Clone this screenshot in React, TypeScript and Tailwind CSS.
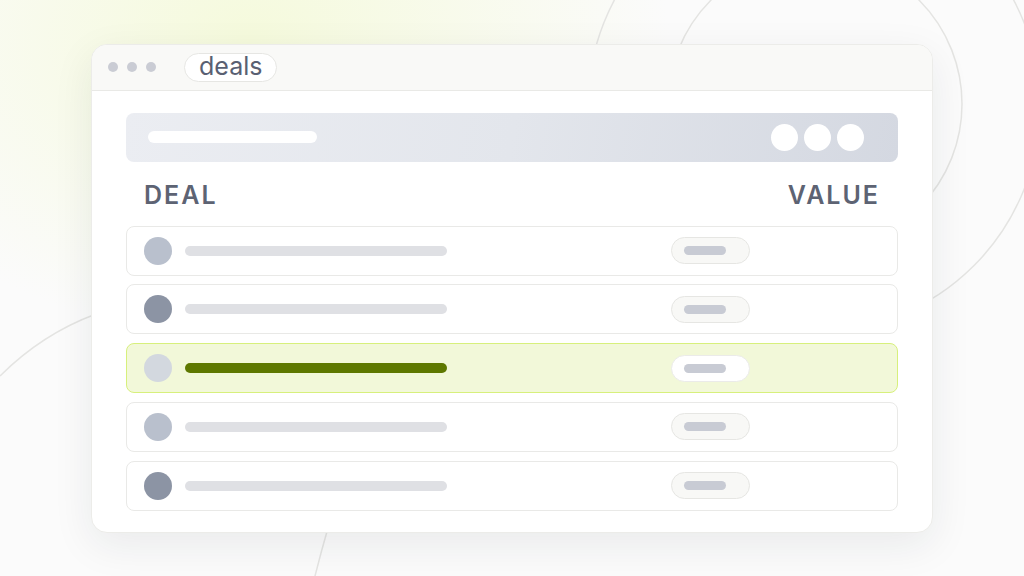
import React from 'react';

type Row = { avatar: string; active?: boolean };

const rows: Row[] = [
  { avatar: 'bg-[#b9c0cd]' },
  { avatar: 'bg-[#8c94a4]' },
  { avatar: 'bg-[#d3d8df]', active: true },
  { avatar: 'bg-[#b9c0cd]' },
  { avatar: 'bg-[#8c94a4]' },
];

const Backdrop = () => (
  <svg className="absolute inset-0 pointer-events-none" width="1024" height="576" viewBox="0 0 1024 576" fill="none">
    <circle cx="815" cy="104" r="147" stroke="#e4e4e2" strokeWidth="1.5" />
    <circle cx="814" cy="106" r="226" stroke="#e4e4e2" strokeWidth="1.5" />
    <path d="M0 376 Q 42 334 96 314" stroke="#e4e4e2" strokeWidth="1.5" />
    <path d="M328 528 Q 321 552 314 580" stroke="#e4e4e2" strokeWidth="1.5" />
  </svg>
);

const DealRow = ({ row }: { row: Row }) => (
  <div
    className={
      row.active
        ? 'h-[50px] flex items-center pl-[17px] rounded-[8px] border border-[#d7f07c] bg-[#f2f8d9]'
        : 'h-[50px] flex items-center pl-[17px] rounded-[8px] border border-[#e9e9e7] bg-white'
    }
  >
    <div className={`w-[28px] h-[28px] rounded-full ${row.avatar}`} />
    <div
      className={
        row.active
          ? 'ml-[13px] w-[262px] h-[10px] rounded-full bg-[#5e7800]'
          : 'ml-[13px] w-[262px] h-[10px] rounded-full bg-[#dfe0e4]'
      }
    />
    <div
      className={
        row.active
          ? 'ml-[224px] w-[79px] h-[27px] rounded-full border border-[#ebebe9] bg-white flex items-center pl-[12px]'
          : 'ml-[224px] w-[79px] h-[27px] rounded-full border border-[#e6e6e3] bg-[#f8f8f6] flex items-center pl-[12px]'
      }
    >
      <div className="w-[42px] h-[9px] rounded-full bg-[#c8cbd4]" />
    </div>
  </div>
);

export default function App() {
  return (
    <div
      className="relative w-full h-[576px] overflow-hidden flex items-center justify-center bg-[#fbfbfb] bg-[radial-gradient(ellipse_420px_300px_at_250px_40px,#f5fadc_0%,rgba(251,251,251,0)_100%)]"
      style={{ fontFamily: 'Inter, "Noto Sans", sans-serif' }}
    >
      <Backdrop />
      <div className="relative w-[842px] h-[489px] rounded-[16px] border border-[#ecece9] bg-white overflow-hidden shadow-[0_12px_40px_rgba(30,35,45,0.08)]">
        <div className="h-[46px] flex items-center bg-[#f9f9f7] border-b border-[#e9e9e6] pl-[16px]">
          <div className="flex gap-[9px]">
            <div className="w-[10px] h-[10px] rounded-full bg-[#caccd4]" />
            <div className="w-[10px] h-[10px] rounded-full bg-[#caccd4]" />
            <div className="w-[10px] h-[10px] rounded-full bg-[#caccd4]" />
          </div>
          <div className="ml-[28px] h-[29px] px-[14px] flex items-center rounded-full border border-[#e6e6e3] bg-white text-[25px] leading-none text-[#596072] pb-[1px]">
            deals
          </div>
        </div>
        <div className="px-[34px] pt-[22px]">
          <div className="h-[49px] flex items-center justify-between rounded-[8px] bg-[linear-gradient(100deg,#ebedf2_0%,#e3e6ec_50%,#d4d8e1_100%)] pl-[22px] pr-[34px]">
            <div className="w-[169px] h-[12px] rounded-full bg-white" />
            <div className="flex gap-[6px]">
              <div className="w-[27px] h-[27px] rounded-full bg-white" />
              <div className="w-[27px] h-[27px] rounded-full bg-white" />
              <div className="w-[27px] h-[27px] rounded-full bg-white" />
            </div>
          </div>
          <div className="h-[64px] pt-[4px] flex items-center justify-between px-[18px] text-[25px] font-semibold tracking-[0.08em] text-[#5d6373] leading-none">
            <span>DEAL</span>
            <span>VALUE</span>
          </div>
          <div className="flex flex-col gap-[8.75px]">
            {rows.map((row, i) => (
              <DealRow key={i} row={row} />
            ))}
          </div>
        </div>
      </div>
    </div>
  );
}
